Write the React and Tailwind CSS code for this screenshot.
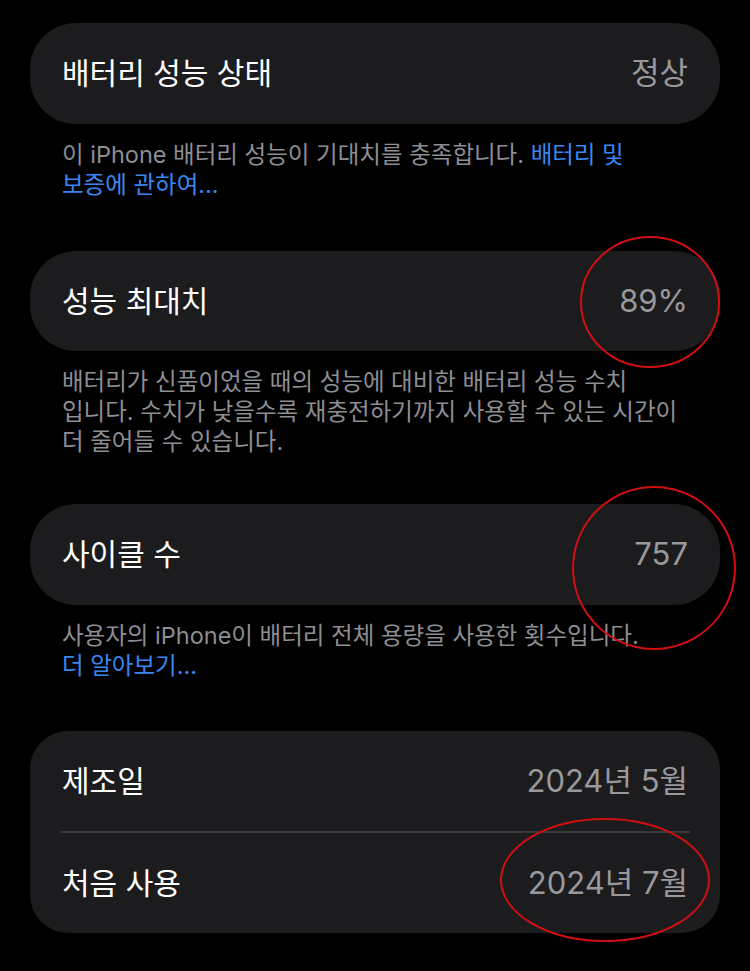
export default function App() {
  return (
    <div className="relative h-[971px] overflow-hidden bg-black px-[30px] pt-[23px] font-['Inter','Noto_Sans_CJK_KR',sans-serif] text-white">
      {/* 배터리 성능 상태 */}
      <div className="flex h-[101px] items-center justify-between rounded-[46px] bg-[#1c1c1e] px-[32px]">
        <span className="text-[30px]">배터리 성능 상태</span>
        <span className="text-[31px] text-[#98989d]">정상</span>
      </div>
      <p className="px-[32px] pt-[16px] text-[23.5px] leading-[30px] text-[#8e8e93]">
        이 iPhone 배터리 성능이 기대치를 충족합니다. <span className="text-[#3a87f2]">배터리 및</span>
        <br />
        <span className="text-[#3a87f2]">보증에 관하여...</span>
      </p>

      {/* 성능 최대치 */}
      <div className="mt-[51px] flex h-[100px] items-center justify-between rounded-[46px] bg-[#1c1c1e] px-[32px]">
        <span className="text-[30px]">성능 최대치</span>
        <span className="text-[31px] text-[#98989d]">89%</span>
      </div>
      <p className="px-[32px] pt-[16px] text-[23.5px] leading-[30px] text-[#8e8e93]">
        배터리가 신품이었을 때의 성능에 대비한 배터리 성능 수치
        <br />
        입니다. 수치가 낮을수록 재충전하기까지 사용할 수 있는 시간이
        <br />
        더 줄어들 수 있습니다.
      </p>

      {/* 사이클 수 */}
      <div className="mt-[47px] flex h-[101px] items-center justify-between rounded-[46px] bg-[#1c1c1e] px-[32px]">
        <span className="text-[30px]">사이클 수</span>
        <span className="text-[31px] text-[#98989d]">757</span>
      </div>
      <p className="px-[32px] pt-[16px] text-[23.5px] leading-[30px] text-[#8e8e93]">
        사용자의 iPhone이 배터리 전체 용량을 사용한 횟수입니다.
        <br />
        <span className="text-[#3a87f2]">더 알아보기...</span>
      </p>

      {/* 날짜 */}
      <div className="mt-[50px] rounded-[38px] bg-[#1c1c1e]">
        <div className="flex h-[100px] items-center justify-between px-[32px]">
          <span className="text-[30px]">제조일</span>
          <span className="text-[31px] text-[#98989d]">2024년 5월</span>
        </div>
        <div className="mx-[30px] h-[2px] bg-[#38383a]" />
        <div className="flex h-[100px] items-center justify-between px-[32px]">
          <span className="text-[30px]">처음 사용</span>
          <span className="text-[31px] text-[#98989d]">2024년 7월</span>
        </div>
      </div>

      {/* 빨간 표시 */}
      <svg
        className="pointer-events-none absolute left-0 top-0"
        width="750"
        height="971"
        viewBox="0 0 750 971"
        fill="none"
      >
        <ellipse cx="650" cy="302" rx="69" ry="65" stroke="#d10f12" strokeWidth="2" />
        <ellipse cx="654" cy="568" rx="81" ry="81" stroke="#d10f12" strokeWidth="2" transform="rotate(-8 654 568)" />
        <ellipse cx="605" cy="880" rx="104" ry="61" stroke="#d10f12" strokeWidth="2" />
      </svg>
    </div>
  );
}
